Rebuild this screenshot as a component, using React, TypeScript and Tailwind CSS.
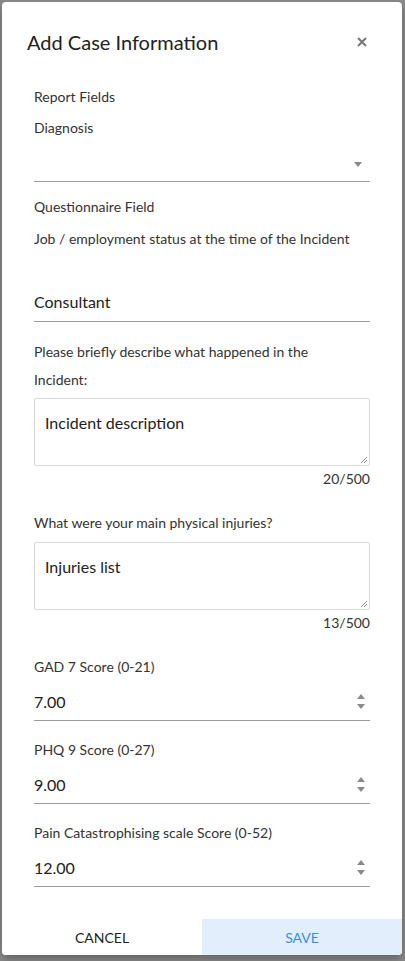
import React from "react";

const Label = ({ children, className = "" }: { children: React.ReactNode; className?: string }) => (
  <div className={`text-[14px] leading-[20px] text-[#333333] ${className}`}>{children}</div>
);

const Spinner = () => (
  <div className="flex flex-col items-center gap-[5px] mr-[5px] mb-[1px]">
    <svg width="8" height="5" viewBox="0 0 8 5">
      <path d="M4 0 L8 5 L0 5 Z" fill="#8a8a8a" />
    </svg>
    <svg width="8" height="5" viewBox="0 0 8 5">
      <path d="M0 0 L8 0 L4 5 Z" fill="#8a8a8a" />
    </svg>
  </div>
);

const NumberField = ({ label, value, mt }: { label: string; value: string; mt: string }) => (
  <div className={mt}>
    <Label>{label}</Label>
    <div className="mt-[13px] flex items-center justify-between border-b border-[#9b9b9b] pb-[6px]">
      <span className="text-[16px] leading-[24px] text-[#212121]">{value}</span>
      <Spinner />
    </div>
  </div>
);

const TextArea = ({ value, mt }: { value: string; mt: string }) => (
  <div className={`${mt} relative h-[68px] border border-[#d9d9d9] rounded-[2px] pl-[10px] pt-[12px]`}>
    <span className="text-[16px] leading-[24px] text-[#212121]">{value}</span>
    <svg className="absolute right-[1px] bottom-[1px]" width="8" height="8" viewBox="0 0 8 8">
      <path d="M7 1 L1 7 M7 4 L4 7" stroke="#8a8a8a" strokeWidth="1" />
    </svg>
  </div>
);

export default function App() {
  return (
    <div
      className="w-[405px] h-[961px] bg-[#8b8b8b] pt-[2px] pl-[2px] overflow-hidden"
      style={{ fontFamily: "Lato, 'Open Sans', sans-serif" }}
    >
      <div className="w-[400px] h-[953px] bg-white rounded-[4px] shadow-[0_4px_10px_rgba(0,0,0,0.3)] flex flex-col overflow-hidden">
        <div className="pl-[25px] pr-[35px] pt-[26px] flex items-center justify-between">
          <h1 className="text-[20px] leading-[28px] text-[#212121] font-normal">Add Case Information</h1>
          <svg width="10" height="10" viewBox="0 0 10 10">
            <path d="M1 1 L9 9 M9 1 L1 9" stroke="#777777" strokeWidth="2" />
          </svg>
        </div>

        <div className="px-[32px] flex flex-col">
          <Label className="mt-[31px]">Report Fields</Label>
          <Label className="mt-[11px]">Diagnosis</Label>
          <div className="h-[44px] border-b border-[#9b9b9b] flex items-end justify-end pb-[14px] pr-[8px]">
            <svg width="8" height="5" viewBox="0 0 8 5">
              <path d="M0 0 L8 0 L4 5 Z" fill="#8a8a8a" />
            </svg>
          </div>
          <Label className="mt-[15px]">Questionnaire Field</Label>
          <Label className="mt-[12px]">Job / employment status at the time of the Incident</Label>

          <div className="mt-[41px] border-b border-[#9b9b9b] pb-[7px]">
            <span className="text-[16px] leading-[24px] text-[#212121]">Consultant</span>
          </div>

          <div className="mt-[16px] text-[14px] leading-[28px] text-[#333333]">
            Please briefly describe what happened in the
            <br />
            Incident:
          </div>
          <TextArea value="Incident description" mt="mt-[4px]" />
          <Label className="mt-[3px] text-right">20/500</Label>

          <Label className="mt-[24px]">What were your main physical injuries?</Label>
          <TextArea value="Injuries list" mt="mt-[9px]" />
          <Label className="mt-[3px] text-right">13/500</Label>

          <NumberField label="GAD 7 Score (0-21)" value="7.00" mt="mt-[24px]" />
          <NumberField label="PHQ 9 Score (0-27)" value="9.00" mt="mt-[19px]" />
          <NumberField label="Pain Catastrophising scale Score (0-52)" value="12.00" mt="mt-[19px]" />
        </div>

        <div className="mt-auto flex h-[36px]">
          <button className="flex-1 flex items-center justify-center text-[14px] text-[#212121] bg-white">
            CANCEL
          </button>
          <button className="flex-1 flex items-center justify-center text-[14px] text-[#3b8ee8] bg-[#e3eefc]">
            SAVE
          </button>
        </div>
      </div>
    </div>
  );
}
